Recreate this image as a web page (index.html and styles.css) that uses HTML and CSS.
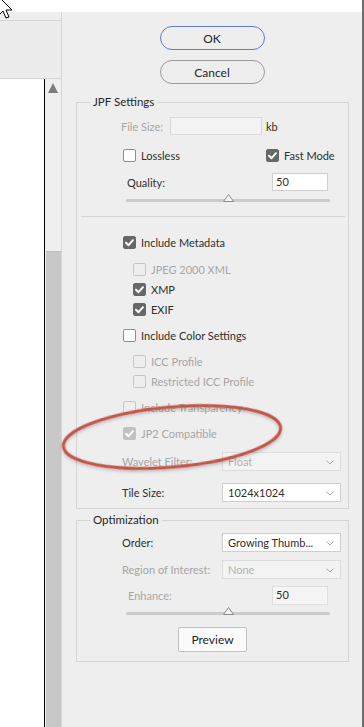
FILE: index.html
```html
<!DOCTYPE html>
<html>
<head>
<meta charset="utf-8">
<link rel="stylesheet" href="styles.css">
</head>
<body>
<div class="screen">
  <div class="main">
    <div class="topbar"></div>
    <div class="content">
      <div class="leftcol">
        <div class="lefttop"><div class="leftbox"></div></div>
        <div class="leftlist">
          <div class="whitearea"></div>
          <div class="scroll">
            <div class="uparrow"></div>
            <div class="thumb"></div>
          </div>
        </div>
      </div>
      <div class="panel">
        <div class="btns">
          <button class="pill ok">OK</button>
          <button class="pill">Cancel</button>
        </div>

        <fieldset class="group jpf">
          <legend>JPF Settings</legend>
          <div class="row r-filesize">
            <span class="lbl dis w-fs">File Size:</span>
            <span class="field dis fs"></span>
            <span class="kb">kb</span>
          </div>
          <div class="row r-lossless">
            <span class="cbg w-lossless"><span class="cb"></span><span>Lossless</span></span>
            <span class="cbg"><span class="cb on"><svg viewBox="0 0 13 13"><polyline points="3,6.8 5.5,9.2 10,4.2"/></svg></span><span>Fast Mode</span></span>
          </div>
          <div class="row r-quality">
            <span class="lbl w-q">Quality:</span>
            <span class="field q">50</span>
          </div>
          <div class="row slider-row r-slider1">
            <div class="track"><svg class="knob" viewBox="0 0 11 8"><polygon points="5.5,0.5 10.5,7.5 0.5,7.5"/></svg></div>
          </div>
          <div class="sep"></div>
          <div class="row lvl1 r-meta">
            <span class="cbg"><span class="cb on"><svg viewBox="0 0 13 13"><polyline points="3,6.8 5.5,9.2 10,4.2"/></svg></span><span>Include Metadata</span></span>
          </div>
          <div class="row lvl2 r-jpegxml">
            <span class="cbg dis"><span class="cb"></span><span>JPEG 2000 XML</span></span>
          </div>
          <div class="row lvl2">
            <span class="cbg"><span class="cb on"><svg viewBox="0 0 13 13"><polyline points="3,6.8 5.5,9.2 10,4.2"/></svg></span><span>XMP</span></span>
          </div>
          <div class="row lvl2">
            <span class="cbg"><span class="cb on"><svg viewBox="0 0 13 13"><polyline points="3,6.8 5.5,9.2 10,4.2"/></svg></span><span>EXIF</span></span>
          </div>
          <div class="row lvl1 r-color">
            <span class="cbg"><span class="cb"></span><span>Include Color Settings</span></span>
          </div>
          <div class="row lvl2 r-icc">
            <span class="cbg dis"><span class="cb"></span><span>ICC Profile</span></span>
          </div>
          <div class="row lvl2">
            <span class="cbg dis"><span class="cb"></span><span>Restricted ICC Profile</span></span>
          </div>
          <div class="row lvl1 r-trans">
            <span class="cbg dis"><span class="cb"></span><span>Include Transparency</span></span>
          </div>
          <div class="row lvl1 r-jp2">
            <span class="cbg dis"><span class="cb on"><svg viewBox="0 0 13 13"><polyline points="3,6.8 5.5,9.2 10,4.2"/></svg></span><span>JP2 Compatible</span></span>
          </div>
          <div class="row sel-row r-wave">
            <span class="lbl dis w-sel">Wavelet Filter:</span>
            <span class="select dis"><span>Float</span><svg class="chev" viewBox="0 0 8 5"><polyline points="0.5,0.5 4,4 7.5,0.5"/></svg></span>
          </div>
          <div class="row sel-row r-tile">
            <span class="lbl w-sel">Tile Size:</span>
            <span class="select"><span>1024x1024</span><svg class="chev" viewBox="0 0 8 5"><polyline points="0.5,0.5 4,4 7.5,0.5"/></svg></span>
          </div>
        </fieldset>

        <fieldset class="group opt">
          <legend>Optimization</legend>
          <div class="row sel-row r-order">
            <span class="lbl w-sel">Order:</span>
            <span class="select"><span>Growing Thumb...</span><svg class="chev" viewBox="0 0 8 5"><polyline points="0.5,0.5 4,4 7.5,0.5"/></svg></span>
          </div>
          <div class="row sel-row r-roi">
            <span class="lbl dis w-sel">Region of Interest:</span>
            <span class="select dis"><span>None</span><svg class="chev" viewBox="0 0 8 5"><polyline points="0.5,0.5 4,4 7.5,0.5"/></svg></span>
          </div>
          <div class="row r-enh">
            <span class="lbl dis w-enh">Enhance:</span>
            <span class="field dis q enh">50</span>
          </div>
          <div class="row slider-row r-slider2">
            <div class="track"><svg class="knob" viewBox="0 0 11 8"><polygon points="5.5,0.5 10.5,7.5 0.5,7.5"/></svg></div>
          </div>
          <div class="prev-wrap"><button class="preview">Preview</button></div>
        </fieldset>
      </div>
    </div>
  </div>
  <div class="edge"></div>

  <svg class="annot" viewBox="0 0 364 727" width="364" height="727">
    <defs>
      <filter id="sh" x="-10%" y="-30%" width="120%" height="160%">
        <feDropShadow dx="0" dy="1.5" stdDeviation="1.5" flood-color="#000" flood-opacity="0.25"/>
      </filter>
    </defs>
    <ellipse cx="172" cy="437" rx="109" ry="30" transform="rotate(-5 172 437)" fill="none" stroke="#c3574b" stroke-width="3" filter="url(#sh)"/>
  </svg>
  <svg class="cursor" viewBox="0 0 20 24" width="20" height="24">
    <polygon points="-2,-4 -2,16 3,11 6,18 9,17 6,10 12,10" fill="#fff" stroke="#000" stroke-width="1" stroke-linejoin="miter"/>
  </svg>
</div>
</body>
</html>
```

FILE: styles.css
```css
* { box-sizing: border-box; }
html, body { margin: 0; padding: 0; }
body {
  width: 364px;
  height: 727px;
  overflow: hidden;
  background: #eeeeee;
  font-family: Lato, "Noto Sans", sans-serif;
  font-size: 11px;
  color: #2e2e2e;
}
.screen { position: relative; display: flex; width: 364px; height: 727px; }
.main { width: 362px; display: flex; flex-direction: column; }
.topbar { height: 12px; background: #ffffff; flex: none; }
.content { flex: 1; display: flex; background: #eeeeee; }
.edge { width: 2px; background: #6f6f6f; }

/* left column */
.leftcol { width: 62px; border-right: 1px solid #d6d6d6; display: flex; flex-direction: column; flex: none; }
.lefttop { padding-top: 8px; }
.leftbox { height: 59px; background: #ececec; border-top: 1px solid #d6d6d6; border-bottom: 1px solid #d6d6d6; }
.leftlist { flex: 1; display: flex; }
.whitearea { width: 44px; background: #ffffff; }
.scroll { width: 17px; border-left: 1px solid #000; background: #efefef; display: flex; flex-direction: column; }
.uparrow {
  width: 0; height: 0;
  margin: 4px 0 0 3px;
  border-left: 5.5px solid transparent;
  border-right: 5.5px solid transparent;
  border-bottom: 10px solid #7c7c7c;
}
.thumb { flex: 1; margin: 158px 0 0 1px; background: #c8c8c8; border-top: 1px solid #bdbdbd; }

/* right panel */
.panel { flex: 1; padding-top: 14px; display: flex; flex-direction: column; }
.btns { display: flex; flex-direction: column; align-items: center; gap: 10px; }
.pill {
  width: 105px; height: 24px;
  border-radius: 12px;
  border: 1px solid #9c9c9c;
  background: #eeeeee;
  font: inherit;
  font-size: 12px;
  color: #262626;
  padding: 0;
}
.pill.ok { border-color: #5d7fc3; }

.group {
  margin: 10px 13px 0 14px;
  padding: 0 0 6px 0;
  border: 1px solid #d4d4d4;
  min-width: 0;
}
.group legend {
  margin-left: 13px;
  padding: 0 3px;
  line-height: 16px;
  font-size: 11.5px;
  color: #262626;
}
.group.opt { margin-top: 3px; padding-bottom: 9px; }

.row { display: flex; align-items: center; height: 20px; white-space: nowrap; }
.lbl { flex: none; }
.dis { color: #a6a6a6; }

.r-filesize { margin-top: 6px; padding-left: 44px; }
.w-fs { width: 49px; }
.field {
  height: 18px;
  background: #ffffff;
  border: 1px solid #cfcfcf;
  padding-left: 3px;
  line-height: 16px;
  color: #2e2e2e;
}
.field.fs { width: 92px; background: #f3f3f3; border-color: #dadada; }
.kb { margin-left: 4px; color: #2e2e2e; }

.r-lossless { margin-top: 9px; padding-left: 46px; }
.w-lossless { width: 143px; }
.cbg { display: flex; align-items: center; gap: 5px; }
.cb {
  width: 13px; height: 13px;
  border: 1px solid #8e8e8e;
  border-radius: 2px;
  background: #ffffff;
  flex: none;
  display: block;
}
.cb svg { display: block; width: 13px; height: 13px; margin: -1px; }
.cb svg polyline { fill: none; stroke: #ffffff; stroke-width: 2; stroke-linecap: round; stroke-linejoin: round; }
.cb.on { background: #686868; border-color: #686868; }
.cbg.dis { color: #a6a6a6; }
.cbg.dis .cb { border-color: #c6c6c6; background: #eeeeee; }
.cbg.dis .cb.on { background: #c2c2c2; border-color: #c2c2c2; }

.r-quality { margin-top: 7px; padding-left: 50px; }
.w-q { width: 145px; }
.field.q { width: 56px; }

.slider-row { height: 10px; padding-left: 49px; }
.r-slider1 { margin-top: 3px; }
.track { position: relative; width: 204px; height: 3px; background: #cbcbcb; border-radius: 1px; }
.knob { position: absolute; left: 97px; top: -5px; width: 11px; height: 8px; }
.knob polygon { fill: #f7f7f7; stroke: #8a8a8a; stroke-width: 1; }

.sep { height: 1px; background: #d6d6d6; margin: 11px 3px 0 4px; }

.lvl1 { padding-left: 46px; }
.lvl2 { padding-left: 56px; }
.r-meta { margin-top: 15px; }
.r-jpegxml { margin-top: 7px; }
.r-color { margin-top: 6px; }
.r-icc { margin-top: 6px; }
.r-trans { margin-top: 6px; }
.r-jp2 { margin-top: 6px; }

.sel-row { padding-left: 45px; }
.w-sel { width: 100px; }
.r-wave { margin-top: 8px; }
.r-tile { margin-top: 11px; }
.select {
  position: relative;
  width: 119px; height: 19px;
  background: #ffffff;
  border: 1px solid #cfcfcf;
  padding-left: 5px;
  line-height: 17px;
  color: #2e2e2e;
  display: flex; align-items: center;
}
.select.dis { background: #f3f3f3; border-color: #dcdcdc; color: #b2b2b2; }
.chev { position: absolute; right: 6px; top: 7px; width: 8px; height: 5px; }
.chev polyline { fill: none; stroke: #a9a9a9; stroke-width: 1; }

.r-order { margin-top: 4px; }
.r-roi { margin-top: 7px; }
.r-enh { margin-top: 6px; padding-left: 51px; }
.w-enh { width: 144px; }
.field.enh { background: #f5f5f5; border-color: #dedede; height: 19px; }
.r-slider2 { margin-top: 3px; }

.prev-wrap { display: flex; justify-content: center; margin-top: 9px; }
.preview {
  width: 69px; height: 25px;
  background: #fafafa;
  border: 1px solid #c2c2c2;
  border-radius: 2px;
  font: inherit;
  font-size: 12px;
  color: #262626;
  padding: 0;
}

.annot { position: absolute; left: 0; top: 0; pointer-events: none; }
.cursor { position: absolute; left: 0; top: 0; overflow: visible; }
```
